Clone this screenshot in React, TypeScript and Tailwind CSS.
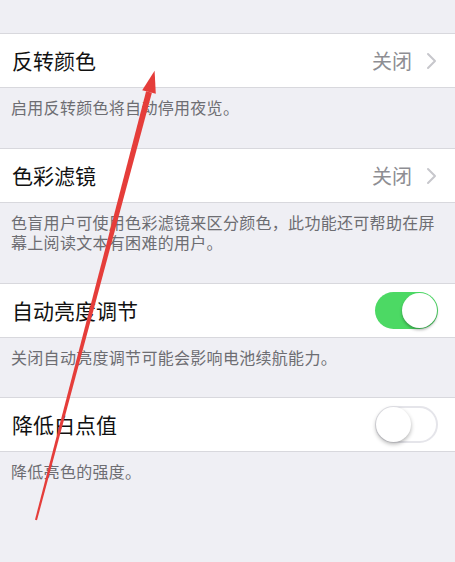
import React from "react";

const font = { fontFamily: '"Noto Sans CJK SC", "Noto Sans", sans-serif' };

function Chevron() {
  return (
    <svg width="12" height="18" viewBox="0 0 12 18" className="ml-[14px]">
      <polyline points="2,2 9,9 2,16" fill="none" stroke="#c7c7cc" strokeWidth="2" strokeLinecap="round" strokeLinejoin="round" />
    </svg>
  );
}

function Toggle({ on }: { on: boolean }) {
  return on ? (
    <div className="w-[63px] h-[37px] rounded-full bg-[#4cd964] relative">
      <div className="absolute right-[1px] top-[1px] w-[35px] h-[35px] rounded-full bg-white shadow-[0_2px_3px_rgba(0,0,0,0.3)]" />
    </div>
  ) : (
    <div className="w-[63px] h-[37px] rounded-full bg-white border-2 border-[#e5e5ea] relative">
      <div className="absolute left-[-1px] top-[-1px] w-[35px] h-[35px] rounded-full bg-white shadow-[0_2px_4px_rgba(0,0,0,0.3)]" />
    </div>
  );
}

function Row({ title, value, toggle }: { title: string; value?: string; toggle?: boolean }) {
  return (
    <div className="h-[55px] bg-white border-y border-[#d8d8dd] flex items-center pl-[12px] pr-[17px]">
      <span className="text-[21px] text-[#111] flex-1 leading-none">{title}</span>
      {value !== undefined ? (
        <div className="flex items-center">
          <span className="text-[20px] text-[#8e8e93] leading-none">{value}</span>
          <Chevron />
        </div>
      ) : (
        <Toggle on={!!toggle} />
      )}
    </div>
  );
}

function Footer({ children, pb }: { children: React.ReactNode; pb: string }) {
  return (
    <div className={`px-[11px] pt-[9px] ${pb} text-[16px] leading-[20px] text-[#6d6d72] tracking-[0.3px]`}>
      {children}
    </div>
  );
}

export default function App() {
  return (
    <div className="relative min-h-[562px] w-[455px] bg-[#efeff4] overflow-hidden" style={font}>
      <div className="h-[33px]" />
      <Row title="反转颜色" value="关闭" />
      <Footer pb="pb-[31px]">启用反转颜色将自动停用夜览。</Footer>
      <Row title="色彩滤镜" value="关闭" />
      <Footer pb="pb-[31px]">
        色盲用户可使用色彩滤镜来区分颜色，此功能还可帮助在屏幕上阅读文本有困难的用户。
      </Footer>
      <Row title="自动亮度调节" toggle={true} />
      <Footer pb="pb-[30px]">关闭自动亮度调节可能会影响电池续航能力。</Footer>
      <Row title="降低白点值" toggle={false} />
      <Footer pb="pb-[30px]">降低亮色的强度。</Footer>
      <svg className="absolute left-0 top-0 pointer-events-none" width="455" height="562" viewBox="0 0 455 562">
        <polygon points="146.1,91.2 151.9,92.8 37,520.3 35,519.7" fill="#e53d3a" />
        <polygon points="154.6,70.7 142.2,90.2 155.8,93.8" fill="#e53d3a" />
      </svg>
    </div>
  );
}
